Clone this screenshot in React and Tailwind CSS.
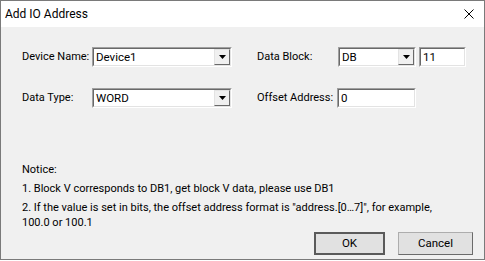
import React from "react";

const font = { fontFamily: "Roboto, 'Liberation Sans', sans-serif" };

const Sunken = ({ className = "", children }) => (
  <div className={`shrink-0 border border-t-[#a0a0a0] border-l-[#a0a0a0] border-b-white border-r-white ${className}`}>
    <div className="flex h-full w-full items-stretch border border-t-[#696969] border-l-[#696969] border-b-[#e3e3e3] border-r-[#e3e3e3] bg-white">
      {children}
    </div>
  </div>
);

const DropButton = () => (
  <div className="flex w-[16px] items-center justify-center border border-t-[#e3e3e3] border-l-[#e3e3e3] border-b-[#696969] border-r-[#696969] bg-[#f0f0f0]">
    <svg width="7" height="4" viewBox="0 0 7 4">
      <path d="M0 0h7L3.5 4z" fill="#000" />
    </svg>
  </div>
);

const Combo = ({ value, className }) => (
  <Sunken className={className}>
    <span className="flex-1 pl-[2px] text-[11.5px] leading-[16px]">{value}</span>
    <DropButton />
  </Sunken>
);

const TextBox = ({ value, className }) => (
  <Sunken className={className}>
    <span className="flex-1 pl-[2px] text-[11.5px] leading-[16px]">{value}</span>
  </Sunken>
);

export default function App() {
  return (
    <div className="h-[261px] w-[485px] bg-white text-[11px] text-black" style={font}>
      <div className="flex h-[260px] w-[485px] flex-col border border-[#7a7a7a]">
        {/* title bar */}
        <div className="flex h-[26px] items-center justify-between bg-white pl-[4px] pr-[10px]">
          <span className="text-[12px]">Add IO Address</span>
          <svg width="10" height="10" viewBox="0 0 10 10">
            <path d="M0.5 0.5L9.5 9.5M9.5 0.5L0.5 9.5" stroke="#000" strokeWidth="1" />
          </svg>
        </div>

        {/* body */}
        <div className="flex flex-1 flex-col bg-[#f0f0f0] pl-[21px] pr-[11px] pt-[20px]">
          <div className="flex h-[20px] items-center">
            <span className="w-[70px] shrink-0 whitespace-nowrap">Device Name:</span>
            <Combo value="Device1" className="h-[20px] w-[140px]" />
            <span className="ml-[25px] w-[81px] shrink-0 whitespace-nowrap">Data Block:</span>
            <Combo value="DB" className="h-[20px] w-[78px]" />
            <TextBox value="11" className="ml-[3px] h-[20px] w-[47px]" />
          </div>
          <div className="mt-[21px] flex h-[20px] items-center">
            <span className="w-[70px] shrink-0 whitespace-nowrap">Data Type:</span>
            <Combo value="WORD" className="h-[20px] w-[140px]" />
            <span className="ml-[25px] w-[80px] shrink-0 whitespace-nowrap">Offset Address:</span>
            <TextBox value="0" className="h-[20px] w-[79px]" />
          </div>

          <div className="mt-[54px] flex flex-col gap-[4px] leading-[15px]">
            <p>Notice:</p>
            <p className="whitespace-nowrap">1. Block V corresponds to DB1, get block V data, please use DB1</p>
            <p className="whitespace-nowrap">
              2. If the value is set in bits, the offset address format is "address.[0…7]", for example,
              <br />
              100.0 or 100.1
            </p>
          </div>

          <div className="mt-[2px] flex justify-end gap-[13px] text-[11.5px]">
            <button className="h-[23px] w-[71px] border-2 border-[#5a5a5a] bg-[#e1e1e1]">OK</button>
            <button className="h-[23px] w-[75px] border border-[#adadad] border-b-[#6b6b6b] border-r-[#6b6b6b] bg-[#e1e1e1]">
              Cancel
            </button>
          </div>
        </div>
      </div>
    </div>
  );
}
